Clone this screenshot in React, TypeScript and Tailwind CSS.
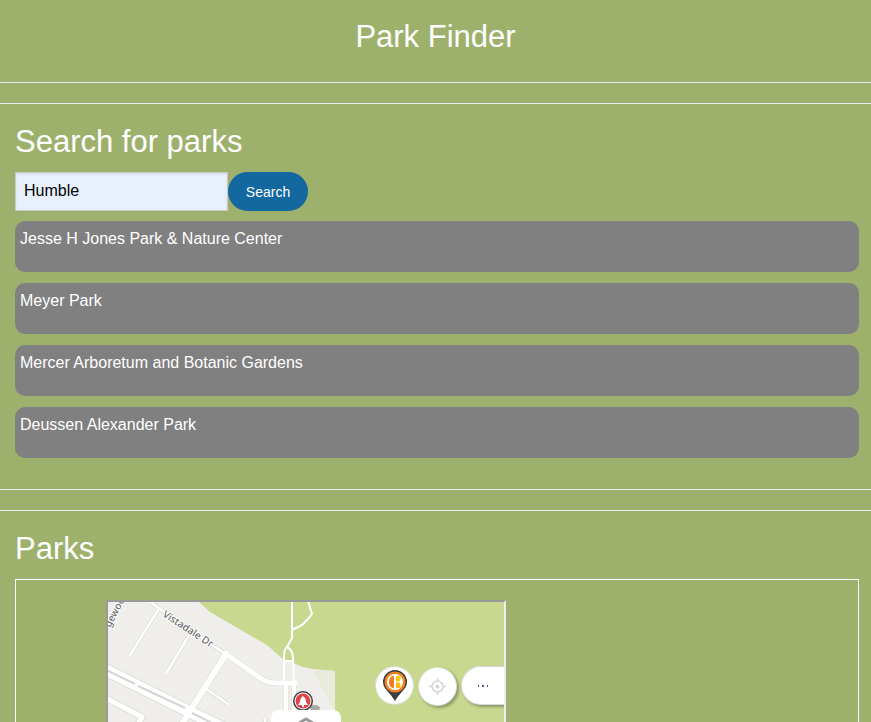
import { useState } from "react";

const parks = [
  "Jesse H Jones Park & Nature Center",
  "Meyer Park",
  "Mercer Arboretum and Botanic Gardens",
  "Deussen Alexander Park",
];

function Divider() {
  return <hr className="my-5 border-t border-[#ececec]" />;
}

function MapArt() {
  return (
    <svg className="block h-full w-full" viewBox="0 0 396 396" preserveAspectRatio="xMinYMin slice" aria-label="Map of Vistadale Dr">
      <rect width="396" height="396" fill="#c8d88f" />
      <path d="M0 0H91L102 10L159 43L175 57L195 65L204 67L227 69V396H0Z" fill="#efeeea" />
      <path d="M204 67L227 69V110Z" fill="#e9ecda" />
      <g fill="none" stroke="#dddcd8" strokeLinejoin="round">
        <path d="M-4 67L82 110L130 133" strokeWidth="13" />
        <path d="M-4 95L34 115L28 126" strokeWidth="7" />
        <path d="M118 52L72 125" strokeWidth="7" />
        <path d="M118 52L152 76Q159 81 169 81H187" strokeWidth="6" />
        <path d="M50 8L22 53M81 33L59 70M97 86L120 102M44 1L52 7L116 51" strokeWidth="4" />
        <path d="M178 81V130M186 81V130M157 117V130" strokeWidth="5" />
      </g>
      <g fill="none" stroke="#fff" strokeLinejoin="round" strokeLinecap="round">
        <path d="M-4 67L82 110L130 133" strokeWidth="11" />
        <path d="M-4 95L34 115L28 126" strokeWidth="5" />
        <path d="M118 52L72 125" strokeWidth="6" />
        <path d="M118 52L152 76Q159 81 169 81H187" strokeWidth="5" />
        <path d="M50 8L22 53M81 33L59 70M97 86L120 102M44 1L52 7L116 51" strokeWidth="2.500" />
        <path d="M178 81V130M186 81V130" strokeWidth="4" />
        <path d="M157 118V130" strokeWidth="2.500" />
        <path d="M184 -2V36L179 45Q176 48 176 54V81M179 45Q184 47 185 55L186 81M176 59H185M200 -1L204 12L201 16L194 23L184 28" strokeWidth="2" />
      </g>
      <path d="M-2 68L27 82M30 84L77 106M84 111L104 121" fill="none" stroke="#d6d5d2" strokeWidth="2" />
      <g fill="#6b6b6b" stroke="#fff" strokeWidth="2" paintOrder="stroke" fontSize="10" fontWeight="500" fontFamily='"Noto Sans", sans-serif'>
        <text transform="translate(54 14) rotate(33)">Vistadale Dr</text>
        <text transform="translate(2 26) rotate(-62)">gewood</text>
      </g>
      <ellipse cx="207" cy="106" rx="5" ry="3" fill="#aaa9a5" />
      <circle cx="195" cy="99" r="10" fill="#3f3f41" />
      <circle cx="195" cy="99" r="8.500" fill="#fff" />
      <circle cx="195" cy="99" r="7.500" fill="#e2434b" />
      <path d="M195 94Q192 96 192 100L190 103H194V105H196V103H200L198 100Q198 96 195 94Z" fill="#fff" />
    </svg>
  );
}

function ParkMap() {
  return (
    <div className="relative h-[400px] w-[400px] max-w-full overflow-hidden border-2 border-t-[#9a9a9a] border-r-[#ededed] border-b-[#ededed] border-l-[#9a9a9a]">
      <MapArt />
      <div className="absolute top-[64px] right-0 flex items-start gap-1">
        <button aria-label="Map pin" className="flex size-[39px] items-center justify-center rounded-full border border-[#d8dccb] bg-white">
          <svg width="26" height="33" viewBox="0 0 26 33">
            <path d="M13 1A12 12 0 0 0 1 13C1 20 8 23 13 32C18 23 25 20 25 13A12 12 0 0 0 13 1Z" fill="#3d3d3f" />
            <circle cx="13" cy="13" r="10.500" fill="#f58220" />
            <circle cx="13" cy="13" r="8" fill="#fff" />
            <path d="M12 6.500V19.500A6.700 6.700 0 0 1 12 6.500Z" fill="#f47b20" />
            <path d="M14 7H18.500V11L17 12.500H14Z" fill="#fdc70c" />
            <path d="M14 13.500H17L18.500 15V19H14Z" fill="#fdb913" />
          </svg>
        </button>
        <button aria-label="Locate" className="mt-px flex size-[39px] items-center justify-center rounded-full border border-[#dedfda] bg-white shadow-[2px_2px_3px_rgba(0,0,0,0.3)]">
          <svg width="17" height="17" viewBox="0 0 17 17" fill="none" stroke="#d4d4d4" strokeWidth="1.500">
            <circle cx="8.500" cy="8.500" r="5.500" />
            <path d="M8.500 0V3M8.500 14V17M0 8.500H3M14 8.500H17" />
            <circle cx="8.500" cy="8.500" r="2" fill="#d4d4d4" stroke="none" />
          </svg>
        </button>
        <button aria-label="More options" className="flex h-[39px] w-[43px] items-center justify-center rounded-l-full border border-r-0 border-[#d8d8d8] bg-white text-[#4a5c8a] shadow-[2px_2px_3px_rgba(0,0,0,0.3)]">
          <svg width="12" height="2" fill="currentColor">
            <path d="M1 0H2V2H1ZM5 0H7V2H5ZM10 0H11V2H10Z" />
          </svg>
        </button>
      </div>
      <button aria-label="Expand panel" className="absolute top-[108px] left-[163px] flex h-10 w-[70px] justify-center rounded-lg bg-white pt-[6px]">
        <svg width="18" height="12" viewBox="0 0 18 12" fill="none" stroke="#999" strokeWidth="3">
          <path d="M2 7L9 3L16 7" />
        </svg>
      </button>
    </div>
  );
}

export default function App() {
  const [query, setQuery] = useState("Humble");
  return (
    <div className="min-h-screen overflow-hidden bg-[#9db16d] font-['Liberation_Sans',Arial,sans-serif] text-base text-white">
      <header className="pt-[15px]">
        <h1 className="mb-6 text-center text-[31px] leading-[43px]">Park Finder</h1>
      </header>
      <Divider />
      <Divider />
      <main>
        <section className="pr-3 pl-[15px]">
          <h2 className="mb-3 text-[31px] leading-9">
            <label htmlFor="park-query">Search for parks</label>
          </h2>
          <form className="flex" onSubmit={(e) => e.preventDefault()}>
            <input
              id="park-query"
              className="h-[39px] w-[213px] border border-[#cacaca] bg-[#e8f0fe] px-2 pb-0.5 text-black shadow-[inset_0_1px_2px_rgba(10,10,10,0.1)] outline-none"
              value={query}
              onChange={(e) => setQuery(e.target.value)}
            />
            <button className="h-[39px] w-20 rounded-full bg-[#1468a0] text-sm">Search</button>
          </form>
          <ul className="mt-[10px] mb-[31px] grid gap-[11px]">
            {parks.map((park) => (
              <li key={park} className="h-[51px] rounded-[10px] bg-[#808080] p-[5px] leading-[26px]">{park}</li>
            ))}
          </ul>
        </section>
        <Divider />
        <Divider />
        <section className="pr-3 pb-5 pl-[15px]">
          <h2 className="mb-3 text-[31px] leading-9">Parks</h2>
          <div className="border border-white py-5 pl-[90px]">
            <ParkMap />
          </div>
        </section>
      </main>
    </div>
  );
}
